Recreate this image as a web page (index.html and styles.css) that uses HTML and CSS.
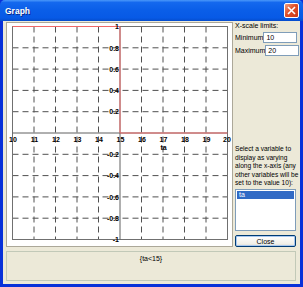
FILE: index.html
```html
<!DOCTYPE html>
<html lang="en">
<head>
    <meta charset="UTF-8">
    <title>Graph</title>
    <link rel="stylesheet" href="styles.css">
</head>
<body>
    <div class="window">
        <div class="titlebar">
            <span class="title">Graph</span>
            <button class="close-x" aria-label="Close">
                <svg width="9" height="9" viewBox="0 0 9 9"><path d="M1 1 L8 8 M8 1 L1 8" stroke="#fff" stroke-width="1.6"/></svg>
            </button>
        </div>
        <div class="client">
            <div class="top">
                <div class="plot">
                    <svg width="225" height="223" viewBox="0 0 225 223" class="chart">
                        <g class="grid">
                            <!-- vertical grid lines -->
                            <line x1="27" y1="3.5" x2="27" y2="216.5"/>
                            <line x1="48.5" y1="3.5" x2="48.5" y2="216.5"/>
                            <line x1="70" y1="3.5" x2="70" y2="216.5"/>
                            <line x1="91.5" y1="3.5" x2="91.5" y2="216.5"/>
                            <line x1="134.5" y1="3.5" x2="134.5" y2="216.5"/>
                            <line x1="156" y1="3.5" x2="156" y2="216.5"/>
                            <line x1="177.5" y1="3.5" x2="177.5" y2="216.5"/>
                            <line x1="199" y1="3.5" x2="199" y2="216.5"/>
                            <!-- horizontal grid lines -->
                            <line x1="5.5" y1="24.8" x2="220.5" y2="24.8"/>
                            <line x1="5.5" y1="46.1" x2="220.5" y2="46.1"/>
                            <line x1="5.5" y1="67.4" x2="220.5" y2="67.4"/>
                            <line x1="5.5" y1="88.7" x2="220.5" y2="88.7"/>
                            <line x1="5.5" y1="131.3" x2="220.5" y2="131.3"/>
                            <line x1="5.5" y1="152.6" x2="220.5" y2="152.6"/>
                            <line x1="5.5" y1="173.9" x2="220.5" y2="173.9"/>
                            <line x1="5.5" y1="195.2" x2="220.5" y2="195.2"/>
                        </g>
                        <rect class="frame" x="5.5" y="3.5" width="215" height="213"/>
                        <line class="axis" x1="113" y1="3.5" x2="113" y2="216.5"/>
                        <line class="axis" x1="5.5" y1="110" x2="220.5" y2="110"/>
                        <polyline class="series" points="5.5,3.5 113,3.5 113,110 220.5,110"/>
                        <g class="ylabels">
                            <text x="112" y="6">1</text>
                            <text x="112" y="27.5">0.8</text>
                            <text x="112" y="48.8">0.6</text>
                            <text x="112" y="70.1">0.4</text>
                            <text x="112" y="91.4">0.2</text>
                            <text x="112" y="134">-0.2</text>
                            <text x="112" y="155.3">-0.4</text>
                            <text x="112" y="176.6">-0.6</text>
                            <text x="112" y="197.9">-0.8</text>
                            <text x="112" y="219">-1</text>
                        </g>
                        <g class="xlabels">
                            <text x="6" y="119">10</text>
                            <text x="27.5" y="119">11</text>
                            <text x="49" y="119">12</text>
                            <text x="70.5" y="119">13</text>
                            <text x="92" y="119">14</text>
                            <text x="113.5" y="119">15</text>
                            <text x="135" y="119">16</text>
                            <text x="156.5" y="119">17</text>
                            <text x="178" y="119">18</text>
                            <text x="199.5" y="119">19</text>
                            <text x="220" y="119">20</text>
                            <text x="156.5" y="127">ta</text>
                        </g>
                    </svg>
                </div>
                <div class="side">
                    <div class="caption">X-scale limits:</div>
                    <div class="field">
                        <label for="min">Minimum</label>
                        <input id="min" type="text" value="10">
                    </div>
                    <div class="field">
                        <label for="max">Maximum</label>
                        <input id="max" type="text" value="20">
                    </div>
                    <p class="hint">Select a variable to<br>display as varying<br>along the x-axis (any<br>other variables will be<br>set to the value 10):</p>
                    <ul class="listbox">
                        <li class="selected">ta</li>
                    </ul>
                    <button class="btn">Close</button>
                </div>
            </div>
            <div class="status">{ta&lt;15}</div>
        </div>
    </div>
</body>
</html>
```

FILE: styles.css
```css
body {
    margin: 0;
    font-family: "Liberation Sans", Arial, sans-serif;
    font-size: 7px;
    color: #000;
}
.window {
    width: 303px;
    height: 287px;
    display: flex;
    flex-direction: column;
    background: #0831d9;
    box-sizing: border-box;
}
.titlebar {
    height: 21px;
    display: flex;
    align-items: center;
    justify-content: space-between;
    padding: 0 4px 0 5px;
    background: linear-gradient(#4a98fa 0%, #1468ee 12%, #0a5ee8 50%, #075ae6 85%, #054ccc 100%);
    border-radius: 5px 5px 0 0;
}
.title {
    color: #fff;
    font-weight: bold;
    font-size: 8.5px;
    text-shadow: 1px 1px 0 #0a2a8a;
}
.close-x {
    width: 15px;
    height: 15px;
    padding: 0;
    border: 1px solid #fff;
    border-radius: 2px;
    background: linear-gradient(135deg, #f0a080, #e0502a 45%, #c83818);
    display: flex;
    align-items: center;
    justify-content: center;
}
.client {
    flex: 1;
    margin: 0 3px 3px 3px;
    background: #ece9d8;
    display: flex;
    flex-direction: column;
    padding: 1px 4px 3px 3px;
}
.top {
    display: flex;
    gap: 2px;
}
.plot {
    width: 225px;
    height: 223px;
    background: #fff;
    border: 1px solid #aca899;
}
.chart {
    display: block;
}
.grid line {
    stroke: #505050;
    stroke-width: 1;
    stroke-dasharray: 6 4;
}
.frame {
    fill: none;
    stroke: #707070;
    stroke-width: 1;
}
.axis {
    stroke: #606060;
    stroke-width: 1;
}
.series {
    fill: none;
    stroke: #f06868;
    stroke-width: 1;
}
.ylabels text {
    text-anchor: end;
    font-size: 7px;
    font-weight: bold;
}
.xlabels text {
    text-anchor: middle;
    font-size: 7px;
    font-weight: bold;
}
.side {
    width: 61px;
    height: 225px;
    display: flex;
    flex-direction: column;
}
.caption {
    line-height: 8px;
    margin-top: 0;
}
.field {
    display: flex;
    align-items: center;
    justify-content: space-between;
    margin-top: 2px;
}
.field input {
    width: 34px;
    height: 11px;
    box-sizing: border-box;
    border: 1px solid #7f9db9;
    padding: 0 2px;
    font: inherit;
    font-size: 7px;
}
.hint {
    margin: auto 0 0 0;
    line-height: 8.6px;
    font-size: 6.6px;
    white-space: nowrap;
}
.listbox {
    list-style: none;
    margin: 1px 0 0 0;
    padding: 1px;
    height: 42px;
    box-sizing: border-box;
    background: #fff;
    border: 1px solid #7f9db9;
}
.listbox li {
    line-height: 8px;
    padding-left: 2px;
}
.listbox .selected {
    background: #316ac5;
    color: #fff;
}
.btn {
    margin-top: 4px;
    height: 12px;
    padding: 0;
    font: inherit;
    font-size: 7px;
    border: 1px solid #003c74;
    border-radius: 2px;
    background: linear-gradient(#ffffff, #f0efe8 80%, #d8d5c8);
    box-shadow: inset 0 0 0 1px #a8c8f0;
}
.status {
    margin-top: 4px;
    height: 30px;
    box-sizing: border-box;
    border: 1px solid #c2c9b8;
    text-align: center;
    padding-top: 3px;
    line-height: 8px;
}
```
